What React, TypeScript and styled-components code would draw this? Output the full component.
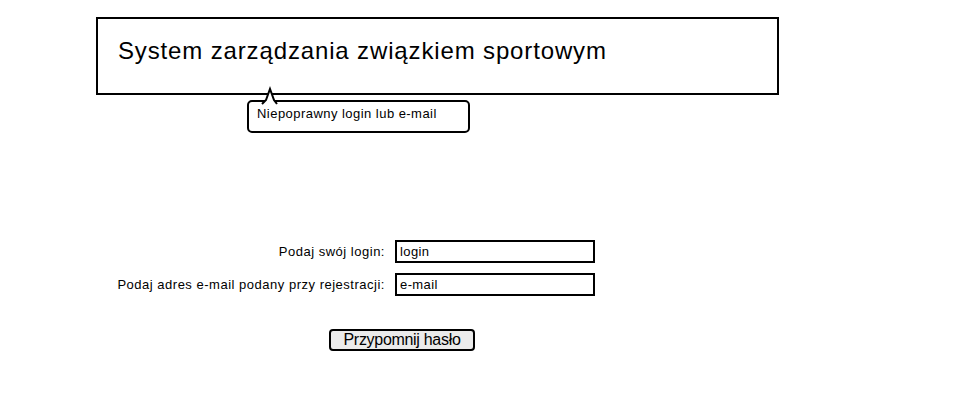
import React from "react";
import styled, { createGlobalStyle } from "styled-components";

const Global = createGlobalStyle`
  html, body { margin: 0; padding: 0; background: #fff; }
  body { font-family: "Liberation Sans", Arial, sans-serif; color: #000; }
`;

const Page = styled.div`
  width: 960px;
  height: 407px;
  display: flex;
  flex-direction: column;
  padding-top: 17px;
  box-sizing: border-box;
  overflow: hidden;
`;

const Header = styled.div`
  margin-left: 96px;
  width: 683px;
  height: 78px;
  box-sizing: border-box;
  border: 2px solid #000;
  display: flex;
  align-items: center;
  padding-left: 20px;
  padding-bottom: 10px;
  font-size: 24px;
  letter-spacing: 0.86px;
`;

const Callout = styled.div`
  position: relative;
  margin-left: 247px;
  margin-top: 5px;
  width: 223px;
  height: 33px;
  box-sizing: border-box;
  border: 2px solid #000;
  border-radius: 5px;
  background: #fff;
  padding: 4px 0 0 8px;
  font-size: 13px;
  letter-spacing: 0.46px;
`;

const Arrow = styled.svg`
  position: absolute;
  left: 12px;
  top: -16px;
  overflow: visible;
`;

const Form = styled.div`
  margin-top: 107px;
  display: grid;
  grid-template-columns: 385px 200px;
  column-gap: 10px;
  row-gap: 10px;
  align-items: center;
`;

const Label = styled.label`
  text-align: right;
  font-size: 13px;
  letter-spacing: 0.51px;
`;

const Field = styled.div`
  width: 200px;
  height: 23px;
  box-sizing: border-box;
  border: 2px solid #000;
  padding: 1px 0 0 3px;
  font-size: 13px;
  line-height: 17px;
  letter-spacing: 0.4px;
`;

const Button = styled.div`
  margin-top: 33px;
  margin-left: 329px;
  width: 146px;
  height: 22px;
  box-sizing: border-box;
  border: 2px solid #000;
  border-radius: 4px;
  background: #ebebeb;
  display: flex;
  align-items: center;
  justify-content: center;
  font-size: 16px;
  letter-spacing: -0.3px;
`;

export default function App() {
  return (
    <>
      <Global />
      <Page>
        <Header>System zarządzania związkiem sportowym</Header>
        <Callout>
          <Arrow width="18" height="18" viewBox="0 0 18 18">
            <path d="M1 18 L5 14 L9 3 L13 14 L16 18" fill="#fff" stroke="#000" strokeWidth="2" strokeLinejoin="miter" />
          </Arrow>
          Niepoprawny login lub e-mail
        </Callout>
        <Form>
          <Label>Podaj swój login:</Label>
          <Field>login</Field>
          <Label>Podaj adres e-mail podany przy rejestracji:</Label>
          <Field>e-mail</Field>
        </Form>
        <Button>Przypomnij hasło</Button>
      </Page>
    </>
  );
}
